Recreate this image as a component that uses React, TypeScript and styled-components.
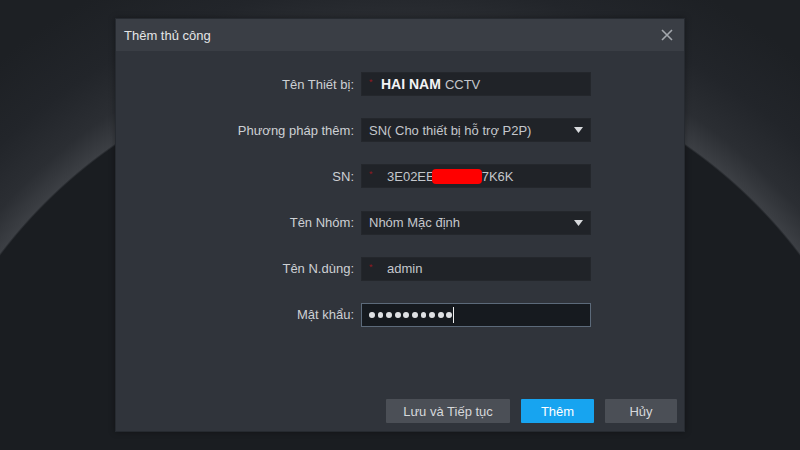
import React from "react";
import styled, { createGlobalStyle } from "styled-components";

const GlobalStyle = createGlobalStyle`
  html, body {
    margin: 0;
    padding: 0;
    background: #1b1e22;
  }
  * {
    box-sizing: border-box;
  }
`;

const Screen = styled.div`
  width: 800px;
  height: 450px;
  overflow: hidden;
  display: flex;
  justify-content: center;
  padding-top: 18px;
  font-family: "Liberation Sans", Arial, sans-serif;
  background:
    radial-gradient(
      circle 640px at 400px 558px,
      #1a1d21 0px,
      #1a1d21 501px,
      #3c3f44 503px,
      #2b2e33 530px,
      #22252a 575px,
      #1d2024 640px
    );
`;

const Dialog = styled.div`
  width: 570px;
  height: 414px;
  display: flex;
  flex-direction: column;
  background: #30343b;
  border: 1px solid #262a30;
  box-shadow: 0 0 6px rgba(0, 0, 0, 0.35);
`;

const TitleBar = styled.div`
  height: 32px;
  flex-shrink: 0;
  display: flex;
  align-items: center;
  justify-content: space-between;
  padding: 0 8px 0 8px;
  background: #3a3e45;
  color: #e4e5e7;
  font-size: 13px;
`;

const CloseButton = styled.button`
  width: 18px;
  height: 18px;
  padding: 0;
  border: none;
  background: transparent;
  display: flex;
  align-items: center;
  justify-content: center;
  cursor: pointer;
`;

const Body = styled.div`
  flex: 1;
  display: flex;
  flex-direction: column;
  justify-content: space-between;
  padding: 21px 7px 8px 0;
`;

const Form = styled.div`
  display: grid;
  grid-template-columns: 238px 230px;
  grid-auto-rows: 24px;
  column-gap: 7px;
  row-gap: 22.2px;
`;

const Label = styled.label`
  display: flex;
  align-items: center;
  justify-content: flex-end;
  color: #cdd0d4;
  font-size: 13px;
  white-space: nowrap;
`;

const Field = styled.div<{ $focused?: boolean }>`
  display: flex;
  align-items: center;
  padding: 0 7px;
  background: ${(p) => (p.$focused ? "#161a1f" : "#202328")};
  border: 1px solid ${(p) => (p.$focused ? "#5c6a7a" : "#24272c")};
  color: #c4c7cc;
  font-size: 13px;
  white-space: nowrap;
  overflow: hidden;
`;

const Required = styled.span`
  color: #8f1820;
  font-size: 9px;
  width: 12px;
  align-self: flex-start;
  margin-top: 4px;
`;

const Value = styled.span<{ $indent?: number }>`
  margin-left: ${(p) => p.$indent ?? 0}px;
  color: #c4c7cc;
`;

const Strong = styled.span`
  color: #f2f3f5;
  font-weight: bold;
  font-size: 14px;
  margin-right: 4px;
`;

const Redact = styled.span`
  display: inline-block;
  width: 50px;
  height: 15px;
  margin-left: -3px;
  background: #ff0000;
  border-radius: 4px;
`;

const Caret = styled.span`
  margin-left: auto;
  display: flex;
  align-items: center;
`;

const Dots = styled.div`
  display: flex;
  align-items: center;
  gap: 2.8px;
`;

const Dot = styled.span`
  width: 5.8px;
  height: 5.8px;
  border-radius: 50%;
  background: #dfe1e4;
`;

const TextCursor = styled.span`
  width: 1px;
  height: 16px;
  background: #f0f0f0;
  margin-left: 1px;
`;

const Actions = styled.div`
  display: flex;
  justify-content: flex-end;
  gap: 11px;
`;

const Button = styled.button<{ $primary?: boolean; $width: number }>`
  width: ${(p) => p.$width}px;
  height: 24px;
  border: none;
  border-radius: 1px;
  background: ${(p) => (p.$primary ? "#17a4f0" : "#4b4f56")};
  color: ${(p) => (p.$primary ? "#ffffff" : "#d6d8db")};
  font-family: "Liberation Sans", Arial, sans-serif;
  font-size: 13px;
  cursor: pointer;
`;

const DropArrow = () => (
  <Caret>
    <svg width="9" height="6" viewBox="0 0 9 6">
      <path d="M0 0 H9 L4.5 6 Z" fill="#d8dadd" />
    </svg>
  </Caret>
);

export default function App() {
  return (
    <>
      <GlobalStyle />
      <Screen>
        <Dialog>
          <TitleBar>
            <span>Thêm thủ công</span>
            <CloseButton aria-label="close">
              <svg width="12" height="12" viewBox="0 0 12 12">
                <path d="M1 1 L11 11 M11 1 L1 11" stroke="#a3a7ad" strokeWidth="1.6" />
              </svg>
            </CloseButton>
          </TitleBar>
          <Body>
            <Form>
              <Label>Tên Thiết bị:</Label>
              <Field>
                <Required>*</Required>
                <Strong>HAI NAM</Strong>
                <Value>CCTV</Value>
              </Field>

              <Label>Phương pháp thêm:</Label>
              <Field>
                <Value>SN( Cho thiết bị hỗ trợ P2P)</Value>
                <DropArrow />
              </Field>

              <Label>SN:</Label>
              <Field>
                <Required>*</Required>
                <Value $indent={6}>3E02EE</Value>
                <Redact />
                <Value>7K6K</Value>
              </Field>

              <Label>Tên Nhóm:</Label>
              <Field>
                <Value>Nhóm Mặc định</Value>
                <DropArrow />
              </Field>

              <Label>Tên N.dùng:</Label>
              <Field>
                <Required>*</Required>
                <Value $indent={6}>admin</Value>
              </Field>

              <Label>Mật khẩu:</Label>
              <Field $focused>
                <Dots>
                  {Array.from({ length: 10 }).map((_, i) => (
                    <Dot key={i} />
                  ))}
                </Dots>
                <TextCursor />
              </Field>
            </Form>
            <Actions>
              <Button $width={124}>Lưu và Tiếp tục</Button>
              <Button $width={73} $primary>
                Thêm
              </Button>
              <Button $width={72}>Hủy</Button>
            </Actions>
          </Body>
        </Dialog>
      </Screen>
    </>
  );
}
